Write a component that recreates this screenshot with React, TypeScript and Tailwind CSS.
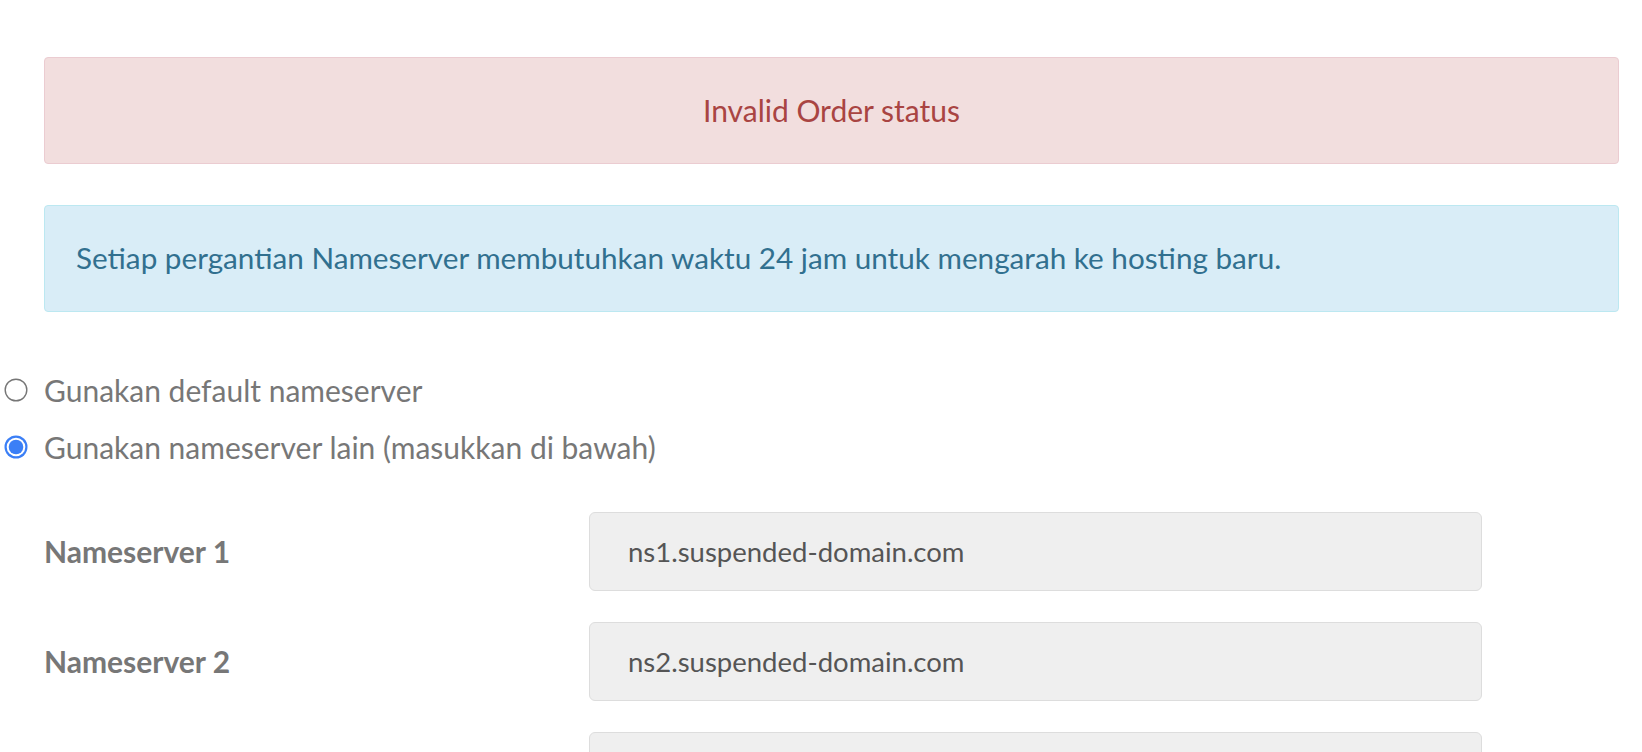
import { useState } from 'react';

const Radio = ({ checked }: { checked: boolean }) => (
  <svg width="24" height="24" viewBox="0 0 24 24" className="shrink-0">
    {checked ? (
      <>
        <circle cx="12" cy="12" r="11.5" fill="#3b7ff6" />
        <circle cx="12" cy="12" r="9.3" fill="#ffffff" />
        <circle cx="12" cy="12" r="7.3" fill="#3b7ff6" />
      </>
    ) : (
      <circle cx="12" cy="12" r="10.8" fill="#ffffff" stroke="#767676" strokeWidth="1.4" />
    )}
  </svg>
);

const App = () => {
  const [mode, setMode] = useState<'default' | 'custom'>('custom');
  const nameservers = ['ns1.suspended-domain.com', 'ns2.suspended-domain.com', ''];

  return (
    <div className="min-h-screen bg-white pt-[57px] pl-[44px] pr-[23px] font-['Lato','Liberation_Sans',sans-serif]">
      <div className="h-[107px] flex items-center justify-center rounded-[4px] border border-[#ebccd1] bg-[#f2dede] text-[30px] text-[#a94442]">
        Invalid Order status
      </div>

      <div className="mt-[41px] h-[107px] flex items-center px-[31px] rounded-[4px] border border-[#bce8f1] bg-[#d9edf7] text-[29.7px] text-[#31708f]">
        Setiap pergantian Nameserver membutuhkan waktu 24 jam untuk mengarah ke hosting baru.
      </div>

      <div className="mt-[62px] flex flex-col gap-[25px] text-[30px] text-[#777777]">
        <label className="relative flex items-center h-[32px] cursor-pointer" onClick={() => setMode('default')}>
          <span className="absolute left-[-40px] top-[4px]">
            <Radio checked={mode === 'default'} />
          </span>
          Gunakan default nameserver
        </label>
        <label className="relative flex items-center h-[32px] cursor-pointer" onClick={() => setMode('custom')}>
          <span className="absolute left-[-40px] top-[4px]">
            <Radio checked={mode === 'custom'} />
          </span>
          Gunakan nameserver lain (masukkan di bawah)
        </label>
      </div>

      <div className="mt-[49px] flex flex-col gap-[31px]">
        {nameservers.map((ns, i) => (
          <div key={i} className="flex items-center">
            <div className="w-[545px] font-bold text-[30px] text-[#777777]">
              Nameserver {i + 1}
            </div>
            <input
              readOnly
              value={ns}
              className="w-[893px] h-[79px] px-[38px] rounded-[6px] border border-[#dddddd] bg-[#efefef] text-[27.5px] text-[#555555] outline-none"
            />
          </div>
        ))}
      </div>
    </div>
  );
};

export default App;
